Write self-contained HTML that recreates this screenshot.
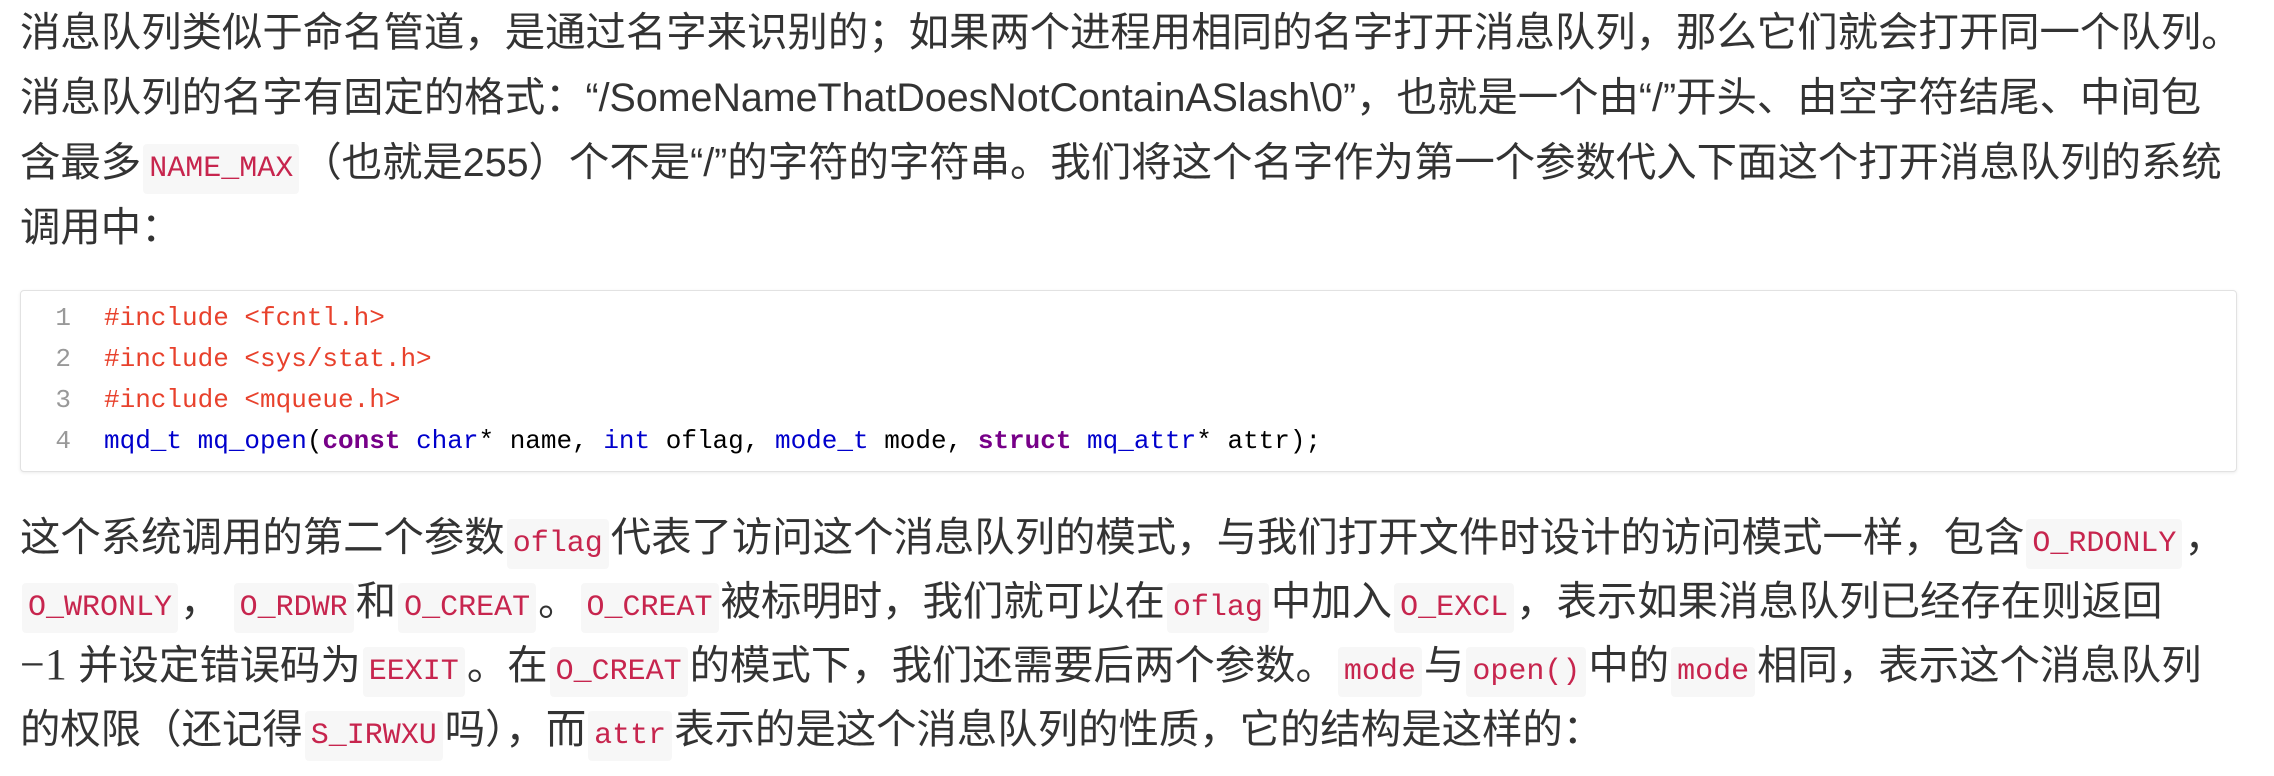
<!DOCTYPE html>
<html><head><meta charset="utf-8"><style>
html,body{margin:0;padding:0;background:#fff;width:2274px;height:776px;overflow:hidden}
body{font-family:"Liberation Sans","Noto Sans CJK SC",sans-serif;color:#333;font-size:40.4px;position:relative}
.l{position:absolute;left:20px;white-space:nowrap;line-height:65px;height:65px}
.p2{line-height:64px;height:64px}
.lat{font-size:39.4px}
code{font-family:"Liberation Mono","DejaVu Sans Mono",monospace;font-size:30px;color:#c7254e;background:#f7f7f7;border-radius:4px;padding:8px 6px;margin:0 2px}
.box{position:absolute;left:20px;top:290px;width:2215px;height:180px;border:1px solid #e2e2e2;border-radius:4px;box-shadow:0 1px 3px rgba(0,0,0,.08);background:#fff}
.c{position:absolute;left:0;white-space:pre;font-family:"Liberation Mono","DejaVu Sans Mono",monospace;font-size:26px;line-height:41px;color:#000}
.n{display:inline-block;width:50px;text-align:right;color:#999;margin-right:33px}
.m{color:#e8412c}.t{color:#0000cc}.k{color:#770088;font-weight:bold}
.math{font-family:"Liberation Serif",serif;font-size:44px}
</style></head><body>
<div class="l" style="top:0">消息队列类似于命名管道，是通过名字来识别的；如果两个进程用相同的名字打开消息队列，那么它们就会打开同一个队列。</div>
<div class="l" style="top:65px">消息队列的名字有固定的格式：<span class="lat">“/SomeNameThatDoesNotContainASlash\0”</span>，也就是一个由<span class="lat">“/”</span>开头、由空字符结尾、中间包</div>
<div class="l" style="top:130px">含最多<code>NAME_MAX</code>（也就是<span class="lat">255</span>）个不是<span class="lat">“/”</span>的字符的字符串。我们将这个名字作为第一个参数代入下面这个打开消息队列的系统</div>
<div class="l" style="top:195px">调用中：</div>
<div class="box">
<div class="c" style="top:7px"><span class="n">1</span><span class="m">#include &lt;fcntl.h&gt;</span></div>
<div class="c" style="top:48px"><span class="n">2</span><span class="m">#include &lt;sys/stat.h&gt;</span></div>
<div class="c" style="top:89px"><span class="n">3</span><span class="m">#include &lt;mqueue.h&gt;</span></div>
<div class="c" style="top:130px"><span class="n">4</span><span class="t">mqd_t</span> <span class="t">mq_open</span>(<span class="k">const</span> <span class="t">char</span>* name, <span class="t">int</span> oflag, <span class="t">mode_t</span> mode, <span class="k">struct</span> <span class="t">mq_attr</span>* attr);</div>
</div>
<div class="l p2" style="top:505px">这个系统调用的第二个参数<code>oflag</code>代表了访问这个消息队列的模式，与我们打开文件时设计的访问模式一样，包含<code>O_RDONLY</code>，</div>
<div class="l p2" style="top:569px"><code>O_WRONLY</code>， <code>O_RDWR</code>和<code>O_CREAT</code>。<code>O_CREAT</code>被标明时，我们就可以在<code>oflag</code>中加入<code>O_EXCL</code>，表示如果消息队列已经存在则返回</div>
<div class="l p2" style="top:633px"><span class="math">−1</span> 并设定错误码为<code>EEXIT</code>。在<code>O_CREAT</code>的模式下，我们还需要后两个参数。<code>mode</code>与<code>open()</code>中的<code>mode</code>相同，表示这个消息队列</div>
<div class="l p2" style="top:697px">的权限（还记得<code>S_IRWXU</code>吗），而<code>attr</code>表示的是这个消息队列的性质，它的结构是这样的：</div>
</body></html>
